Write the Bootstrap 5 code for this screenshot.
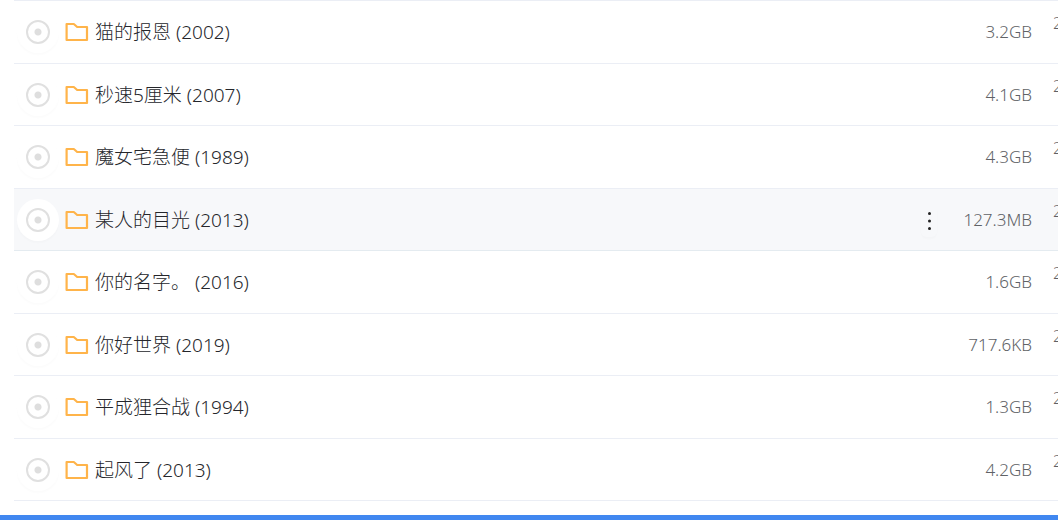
<!DOCTYPE html>
<html lang="zh-CN">
<head>
<meta charset="utf-8">
<meta name="viewport" content="width=device-width, initial-scale=1">
<title>文件列表</title>
<link href="https://cdn.jsdelivr.net/npm/bootstrap@5.3.0/dist/css/bootstrap.min.css" rel="stylesheet">
<style>
  body { font-family: "Noto Sans", "Noto Sans CJK SC", sans-serif; font-weight: 300; background: #fff; overflow-x: hidden; }
  .file-list { margin-left: 14px; border-top: 1px solid #ebeef5; }
  .file-row { height: 62px; gap: 6px; padding-left: 3px; border-bottom: 1px solid #ebeef5; }
  .file-row:nth-child(odd) { height: 63px; }
  .file-row.is-hover { background: #f7f8fa; border-color: #e4ebf0; }
  .pick { width: 42px; height: 42px; background: #fff; box-shadow: 0 2px 2px rgba(0,0,0,.015); }
  .pick input { appearance: none; width: 24px; height: 24px; margin: 0; border: 2px solid #e0e0e0; border-radius: 50%;
    background: radial-gradient(circle, #dedede 3px, transparent 4px); }
  .file-name { font-size: 19px; line-height: 28px; color: #25262b; }
  .more { width: 16px; height: 34px; color: #222; border-radius: 6px; box-shadow: 0 2px 2px rgba(0,0,0,.015); }
  .file-size { width: 89px; font-size: 17px; line-height: 24px; color: #606266; }
  .file-date { width: 5px; margin-left: 15px; padding-top: 10px; font-size: 16px; line-height: 24px; color: #606266; }
  .bottom-bar { height: 5px; background: #4087f0; }
</style>
</head>
<body>
<svg class="d-none" aria-hidden="true">
  <symbol id="folder" viewBox="0 0 24 20"><path d="M1.6 2h7.2l3.4 3H22v13H1.6z" fill="none" stroke="#ffb44a" stroke-width="2.2" stroke-linejoin="round"/></symbol>
  <symbol id="dots" viewBox="0 0 16 34"><g fill="currentColor"><circle cx="8.5" cy="10.5" r="1.5"/><circle cx="8.5" cy="18" r="1.5"/><circle cx="8.5" cy="25.5" r="1.5"/></g></symbol>
</svg>
<main>
  <ul class="file-list list-unstyled mb-0" id="files"></ul>
</main>
<footer class="bottom-bar fixed-bottom"></footer>
<script>
  const files = [
    ["猫的报恩 (2002)", "3.2GB"],
    ["秒速5厘米 (2007)", "4.1GB"],
    ["魔女宅急便 (1989)", "4.3GB"],
    ["某人的目光 (2013)", "127.3MB"],
    ["你的名字。 (2016)", "1.6GB"],
    ["你好世界 (2019)", "717.6KB"],
    ["平成狸合战 (1994)", "1.3GB"],
    ["起风了 (2013)", "4.2GB"]
  ];
  const hovered = 3;
  document.getElementById("files").innerHTML = files.map(([name, size], i) => `
    <li class="file-row d-flex align-items-center ${i === hovered ? "is-hover" : ""}">
      <label class="pick rounded-circle d-flex align-items-center justify-content-center flex-shrink-0">
        <input type="checkbox" aria-label="${name}">
      </label>
      <svg class="flex-shrink-0" width="24" height="20" aria-hidden="true"><use href="#folder"/></svg>
      <a class="file-name flex-grow-1 text-truncate text-decoration-none" href="#">${name}</a>
      ${i === hovered ? `<button class="more btn p-0 border-0 d-flex flex-shrink-0" type="button" aria-label="更多"><svg width="16" height="34"><use href="#dots"/></svg></button>` : ""}
      <span class="file-size text-end flex-shrink-0">${size}</span>
      <span class="file-date align-self-start flex-shrink-0">2</span>
    </li>`).join("");
</script>
<script src="https://cdn.jsdelivr.net/npm/bootstrap@5.3.0/dist/js/bootstrap.bundle.min.js"></script>
</body>
</html>
